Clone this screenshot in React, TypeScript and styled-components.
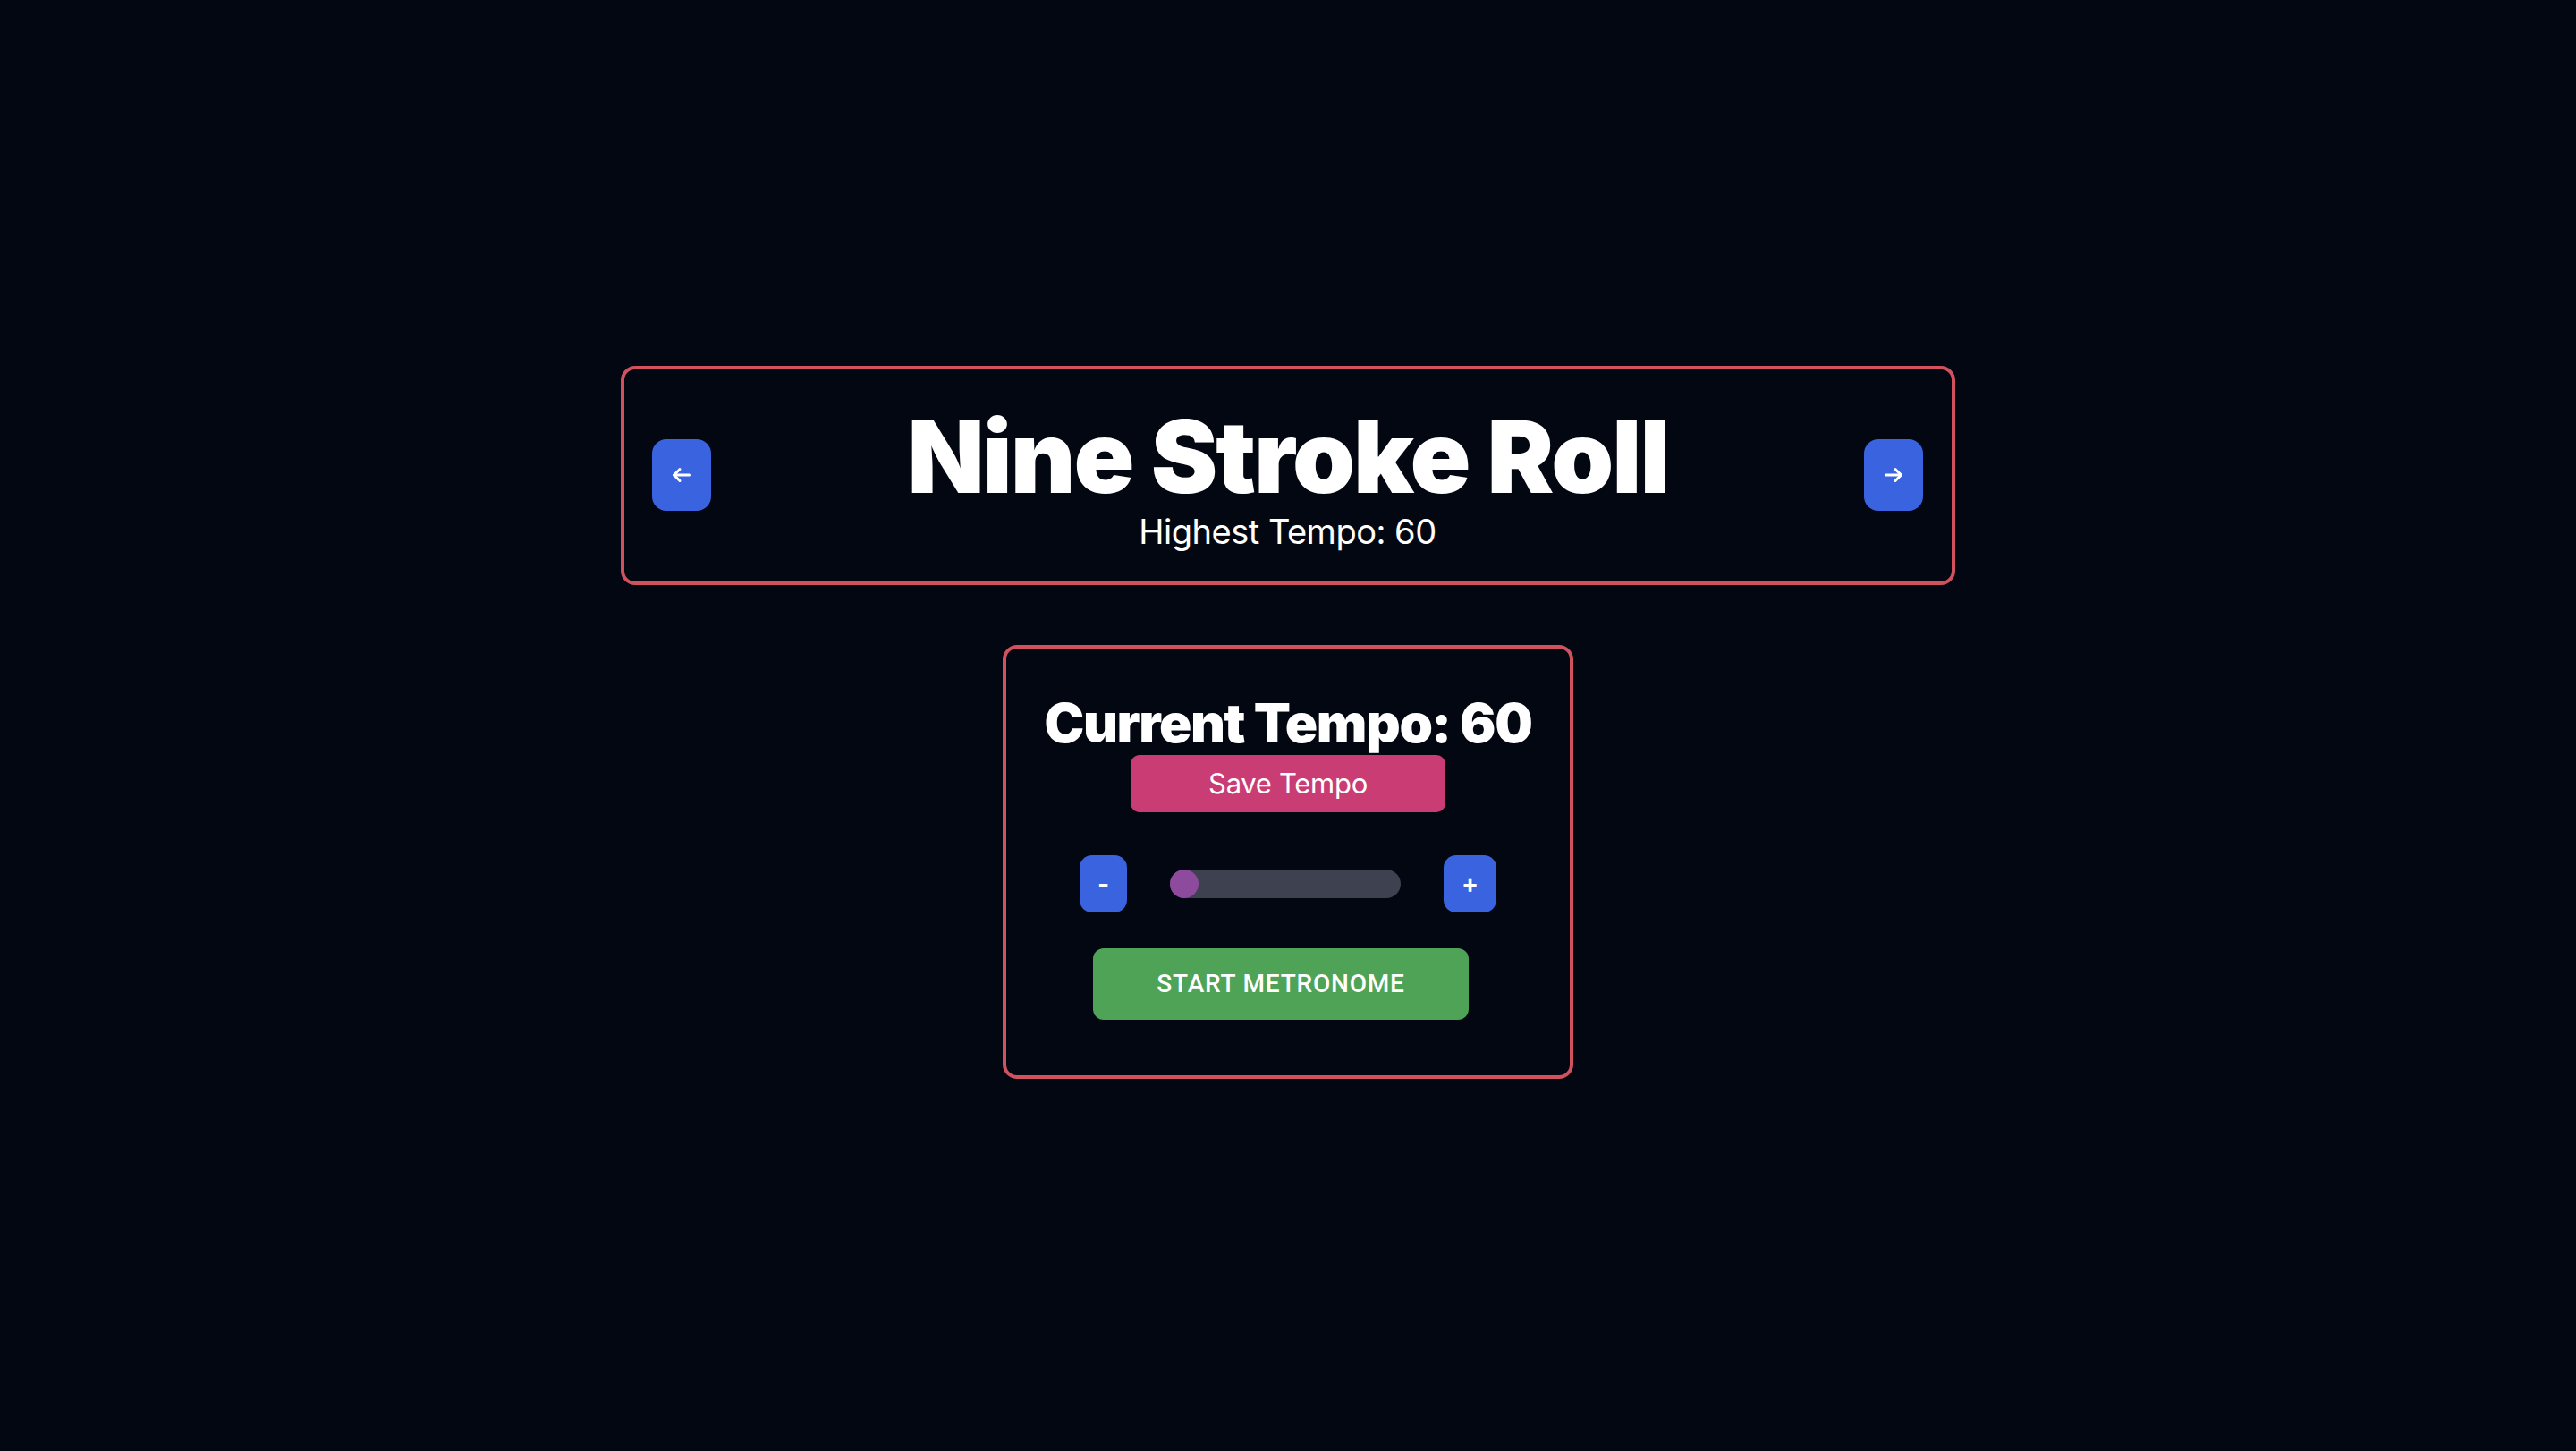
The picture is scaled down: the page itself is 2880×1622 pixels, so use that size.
import React from "react";
import styled, { createGlobalStyle } from "styled-components";

const Global = createGlobalStyle`
  html, body { margin: 0; padding: 0; background: #030712; }
  body { font-family: Inter, "Noto Sans", sans-serif; color: #ffffff; }
  * { box-sizing: border-box; }
`;

const Page = styled.main`
  min-height: 100vh;
  display: flex;
  flex-direction: column;
  align-items: center;
  justify-content: center;
  gap: 67px;
  padding-bottom: 8px;
`;

const HeaderCard = styled.section`
  width: 1492px;
  border: 4px solid #d1515f;
  border-radius: 16px;
  padding: 29px 32px 29px 31px;
  display: flex;
  align-items: center;
  justify-content: space-between;
`;

const NavButton = styled.button`
  width: 66px;
  height: 80px;
  border: none;
  border-radius: 16px;
  background: #3a63e0;
  color: #ffffff;
  display: flex;
  align-items: center;
  justify-content: center;
  padding: 0;
  cursor: pointer;
`;

const TitleBlock = styled.div`
  flex: 1;
  display: flex;
  flex-direction: column;
  align-items: center;
  padding: 8px 0 3px;
`;

const Title = styled.h1`
  margin: 0;
  font-family: Inter, sans-serif;
  font-weight: 900;
  font-size: 112px;
  line-height: 120px;
  letter-spacing: -0.018em;
  color: #ffffff;
`;

const Subtitle = styled.p`
  margin: 0;
  font-family: Inter, sans-serif;
  font-weight: 400;
  font-size: 38px;
  line-height: 48px;
  letter-spacing: -0.5px;
  color: #ffffff;
`;

const TempoCard = styled.section`
  width: 638px;
  border: 4px solid #d1515f;
  border-radius: 16px;
  padding: 47px 0 62px;
  display: flex;
  flex-direction: column;
  align-items: center;
`;

const TempoHeading = styled.h2`
  margin: 0;
  font-family: Inter, sans-serif;
  font-weight: 900;
  font-size: 60px;
  line-height: 72px;
  letter-spacing: -0.023em;
  color: #ffffff;
`;

const SaveButton = styled.button`
  width: 352px;
  height: 64px;
  border: none;
  border-radius: 10px;
  background: #c93c74;
  color: #ffffff;
  font-family: Inter, sans-serif;
  font-size: 31px;
  font-weight: 400;
  letter-spacing: -0.3px;
  padding: 0;
  cursor: pointer;
`;

const ControlRow = styled.div`
  margin-top: 48px;
  display: flex;
  align-items: center;
  gap: 48px;
`;

const StepButton = styled.button`
  height: 64px;
  padding: 0 20px;
  border: none;
  border-radius: 14px;
  background: #3a63e0;
  color: #ffffff;
  font-family: Inter, sans-serif;
  font-size: 28px;
  font-weight: 700;
  cursor: pointer;
`;

const Slider = styled.input`
  -webkit-appearance: none;
  appearance: none;
  width: 258px;
  height: 32px;
  margin: 0;
  border-radius: 16px;
  background: #3d4150;
  outline: none;

  &::-webkit-slider-thumb {
    -webkit-appearance: none;
    appearance: none;
    width: 32px;
    height: 32px;
    border-radius: 50%;
    background: #8e4a9c;
    border: none;
  }
`;

const StartButton = styled.button`
  margin-top: 40px;
  margin-right: 16px;
  width: 420px;
  height: 80px;
  border: none;
  border-radius: 12px;
  background: #4ea357;
  color: #ffffff;
  font-family: Roboto, "Liberation Sans", sans-serif;
  font-weight: 500;
  font-size: 28px;
  letter-spacing: 0.8px;
  text-transform: uppercase;
  padding: 0;
  cursor: pointer;
`;

const Arrow = ({ dir }: { dir: "left" | "right" }) => (
  <svg
    width="24"
    height="20"
    viewBox="0 0 24 20"
    fill="none"
    stroke="#ffffff"
    strokeWidth="3"
    strokeLinecap="round"
    strokeLinejoin="round"
    style={{ transform: dir === "right" ? "scaleX(-1)" : undefined }}
  >
    <path d="M3.5 10H20.5" />
    <path d="M10 3.5L3.5 10L10 16.5" />
  </svg>
);

export default function App() {
  const [tempo, setTempo] = React.useState(60);
  return (
    <>
      <Global />
      <Page>
        <HeaderCard>
          <NavButton aria-label="Previous">
            <Arrow dir="left" />
          </NavButton>
          <TitleBlock>
            <Title>Nine Stroke Roll</Title>
            <Subtitle>Highest Tempo: 60</Subtitle>
          </TitleBlock>
          <NavButton aria-label="Next">
            <Arrow dir="right" />
          </NavButton>
        </HeaderCard>
        <TempoCard>
          <TempoHeading>Current Tempo: {tempo}</TempoHeading>
          <SaveButton>Save Tempo</SaveButton>
          <ControlRow>
            <StepButton onClick={() => setTempo((t) => Math.max(60, t - 1))}>-</StepButton>
            <Slider
              type="range"
              min={60}
              max={240}
              value={tempo}
              onChange={(e) => setTempo(Number(e.target.value))}
            />
            <StepButton onClick={() => setTempo((t) => Math.min(240, t + 1))}>+</StepButton>
          </ControlRow>
          <StartButton>Start Metronome</StartButton>
        </TempoCard>
      </Page>
    </>
  );
}
